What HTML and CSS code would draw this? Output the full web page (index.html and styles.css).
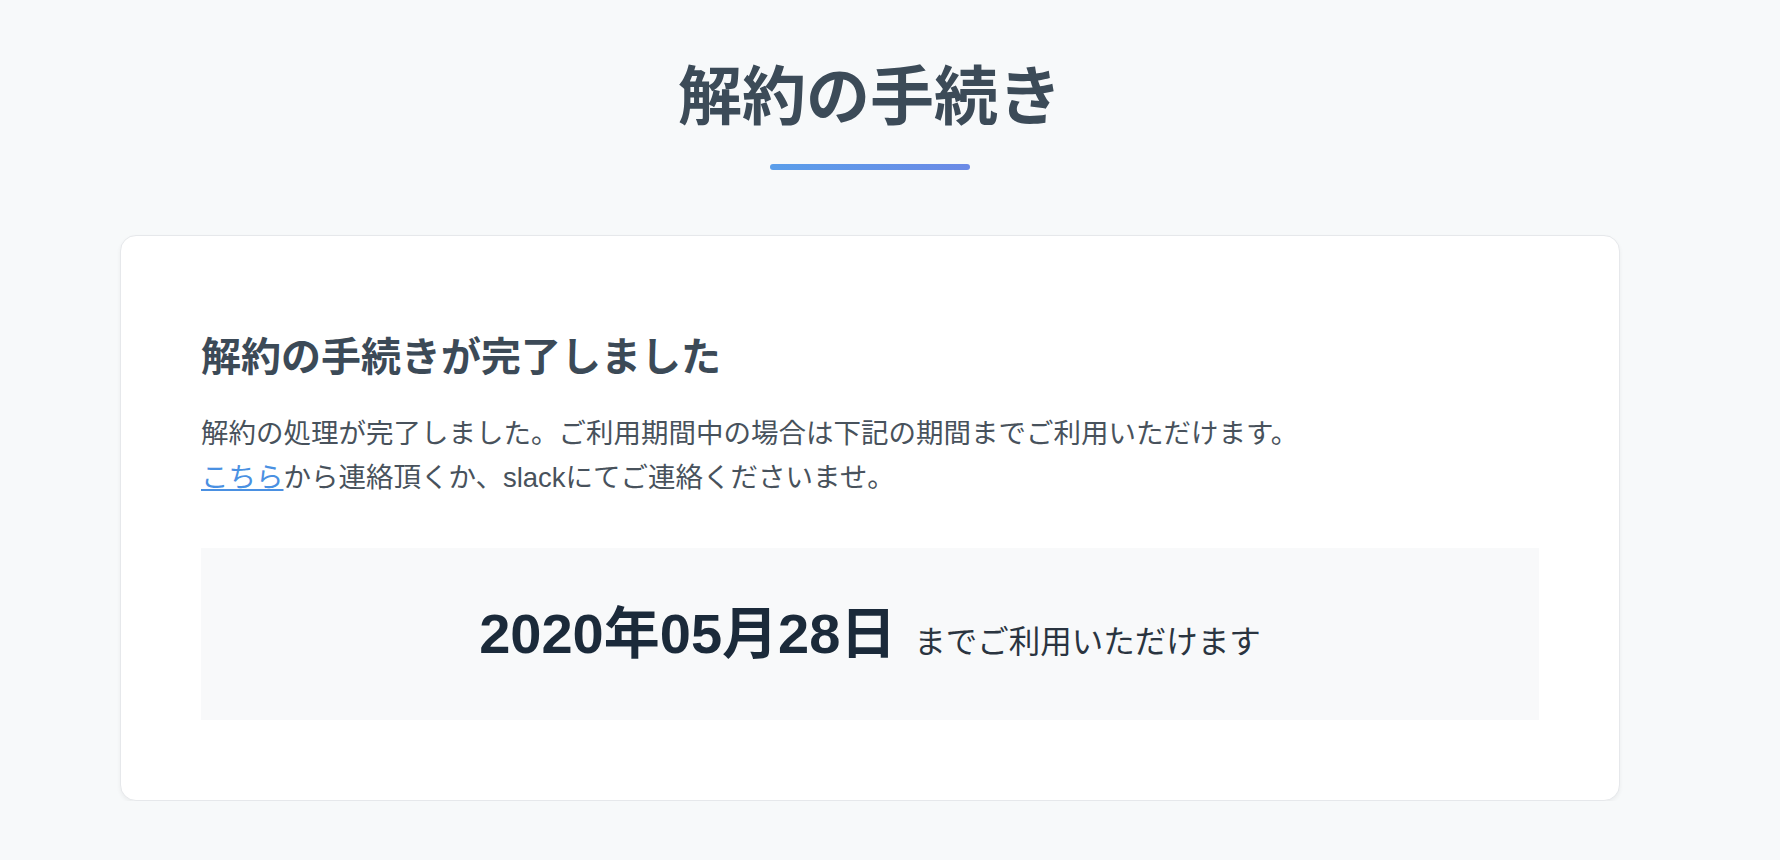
FILE: index.html
```html
<!DOCTYPE html>
<html lang="ja">
<head>
  <meta charset="UTF-8">
  <meta name="viewport" content="width=device-width, initial-scale=1.0">
  <title>解約の手続き</title>
  <link rel="stylesheet" href="styles.css">
</head>
<body>
  <main class="page">
    <header class="page-header">
      <h1>解約の手続き</h1>
      <span class="title-bar"></span>
    </header>

    <section class="card">
      <h2>解約の手続きが完了しました</h2>
      <p class="message">
        解約の処理が完了しました。ご利用期間中の場合は下記の期間までご利用いただけます。<br>
        <a href="#" class="link">こちら</a>から連絡頂くか、slackにてご連絡くださいませ。
      </p>

      <div class="period">
        <span class="period-date">2020年05月28日</span>
        <span class="period-note">までご利用いただけます</span>
      </div>
    </section>
  </main>
</body>
</html>
```

FILE: styles.css
```css
/* Styles généraux */
body {
  font-family: "Liberation Sans", "Noto Sans CJK JP", sans-serif;
  margin: 0;
  padding: 0;
  background-color: #f7f9fa;
  color: #3c4a57;
}

.page {
  width: 1500px;
  margin-left: 120px;
  padding-top: 60px;
}

.page-header {
  display: flex;
  flex-direction: column;
  align-items: center;
}

.page-header h1 {
  margin: 0;
  font-size: 64px;
  line-height: 74px;
  font-weight: bold;
  color: #3c4b58;
}

.title-bar {
  display: block;
  width: 200px;
  height: 6px;
  margin-top: 30px;
  border-radius: 3px;
  background: linear-gradient(90deg, #5a9eea, #6b8ae6);
}

.card {
  margin-top: 65px;
  padding: 94px 80px 80px;
  background-color: white;
  border: 1px solid #e6e8eb;
  border-radius: 16px;
  box-shadow: 0 2px 4px rgba(0, 0, 0, 0.05);
}

.card h2 {
  margin: 0;
  font-size: 40px;
  line-height: 54px;
  font-weight: bold;
  color: #3c4a57;
}

.message {
  margin: 28px 0 0;
  font-size: 27.5px;
  line-height: 44px;
  color: #48525c;
}

.link {
  color: #4a90e2;
  text-decoration: underline;
}

.period {
  display: flex;
  justify-content: center;
  align-items: baseline;
  gap: 18px;
  margin-top: 48px;
  height: 172px;
  line-height: 172px;
  background-color: #f8f9fa;
}

.period-date {
  font-size: 56px;
  font-weight: bold;
  color: #1b2a3a;
}

.period-note {
  font-size: 31.5px;
  color: #2a3440;
}
```
